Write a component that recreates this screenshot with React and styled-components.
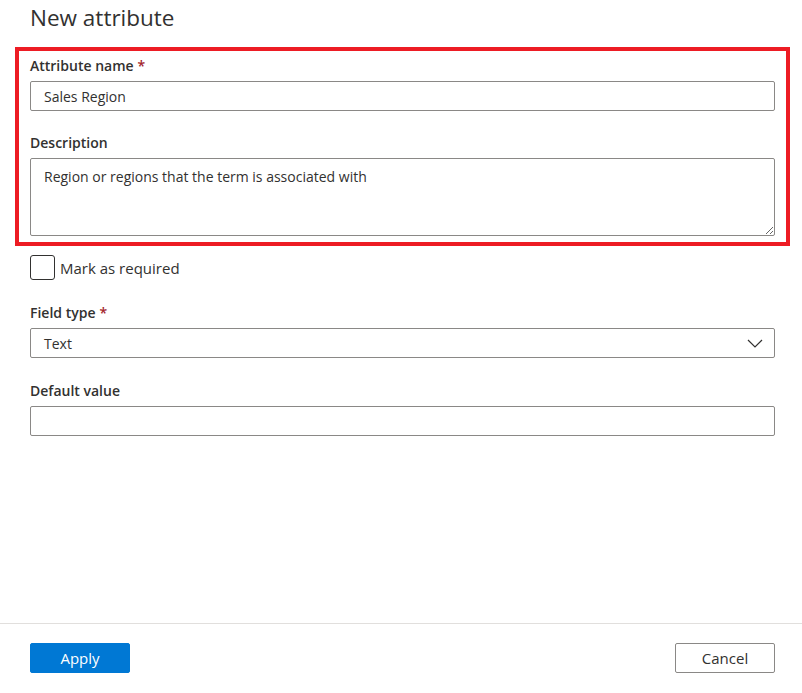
import styled, { createGlobalStyle } from 'styled-components';

const GlobalStyle = createGlobalStyle`
    html, body {
        margin: 0;
        padding: 0;
        background: #ffffff;
    }
    body {
        font-family: "Segoe UI", "Open Sans", sans-serif;
        color: #323130;
    }
`;

const Panel = styled.div`
    display: flex;
    flex-direction: column;
    width: 802px;
    height: 693px;
    box-sizing: border-box;
`;

const Header = styled.div`
    padding: 2px 30px 0;
`;

const Title = styled.h1`
    margin: 0;
    font-size: 22.5px;
    line-height: 32px;
    font-weight: 400;
    color: #323130;
`;

const Body = styled.div`
    flex: 1;
    display: flex;
    flex-direction: column;
    padding: 13px 27px 0 30px;
`;

const Highlight = styled.div`
    display: flex;
    flex-direction: column;
    gap: 17px;
    margin: 0 -15px;
    padding: 0 11px 6px;
    border: 4px solid #ed1c24;
`;

const Field = styled.div`
    display: flex;
    flex-direction: column;
`;

const Label = styled.label`
    display: block;
    padding: 5px 0;
    font-size: 14px;
    line-height: 20px;
    font-weight: 600;
    color: #323130;
`;

const Required = styled.span`
    color: #a4262c;
    margin-left: 4px;
`;

const TextInput = styled.input`
    box-sizing: border-box;
    width: 100%;
    height: 30px;
    margin: 0;
    padding: 0 13px;
    border: 1px solid #8a8886;
    border-radius: 2px;
    font-family: inherit;
    font-size: 14px;
    color: #323130;
    background: #fff;
    outline: none;
`;

const TextArea = styled.textarea`
    box-sizing: border-box;
    display: block;
    width: 100%;
    height: 78px;
    margin: 0;
    padding: 8px 13px;
    border: 1px solid #8a8886;
    border-radius: 2px;
    font-family: inherit;
    font-size: 14px;
    line-height: 20px;
    color: #323130;
    background: #fff;
    outline: none;
`;

const CheckRow = styled.label`
    display: flex;
    align-items: center;
    gap: 5px;
    margin-top: 9px;
    font-size: 15px;
    color: #323130;
`;

const CheckBox = styled.span`
    box-sizing: border-box;
    width: 25px;
    height: 25px;
    border: 1px solid #323130;
    border-radius: 3px;
`;

const Fields = styled.div`
    display: flex;
    flex-direction: column;
    gap: 18px;
    margin-top: 18px;
`;

const Select = styled.div`
    box-sizing: border-box;
    display: flex;
    align-items: center;
    justify-content: space-between;
    height: 30px;
    padding: 0 11px 0 13px;
    border: 1px solid #8a8886;
    border-radius: 2px;
    font-size: 14px;
    color: #323130;
`;

const Footer = styled.div`
    display: flex;
    justify-content: space-between;
    align-items: center;
    padding: 19px 27px 20px 30px;
    border-top: 1px solid #e1dfdd;
`;

const Button = styled.button`
    box-sizing: border-box;
    width: 100px;
    height: 30px;
    border-radius: 2px;
    font-family: inherit;
    font-size: 15px;
    cursor: pointer;
    border: 1px solid ${({ $primary }) => ($primary ? '#0078d4' : '#8a8886')};
    background: ${({ $primary }) => ($primary ? '#0078d4' : '#ffffff')};
    color: ${({ $primary }) => ($primary ? '#ffffff' : '#323130')};
`;

const Chevron = () => (
    <svg width="16" height="9" viewBox="0 0 16 9" fill="none">
        <path d="M1 1l7 7 7-7" stroke="#323130" strokeWidth="1.2" />
    </svg>
);

export default function App() {
    return (
        <>
            <GlobalStyle />
            <Panel>
                <Header>
                    <Title>New attribute</Title>
                </Header>
                <Body>
                    <Highlight>
                        <Field>
                            <Label>Attribute name<Required>*</Required></Label>
                            <TextInput defaultValue="Sales Region" />
                        </Field>
                        <Field>
                            <Label>Description</Label>
                            <TextArea defaultValue="Region or regions that the term is associated with" />
                        </Field>
                    </Highlight>
                    <CheckRow>
                        <CheckBox />
                        Mark as required
                    </CheckRow>
                    <Fields>
                        <Field>
                            <Label>Field type<Required>*</Required></Label>
                            <Select>
                                <span>Text</span>
                                <Chevron />
                            </Select>
                        </Field>
                        <Field>
                            <Label>Default value</Label>
                            <TextInput />
                        </Field>
                    </Fields>
                </Body>
                <Footer>
                    <Button $primary>Apply</Button>
                    <Button>Cancel</Button>
                </Footer>
            </Panel>
        </>
    );
}
